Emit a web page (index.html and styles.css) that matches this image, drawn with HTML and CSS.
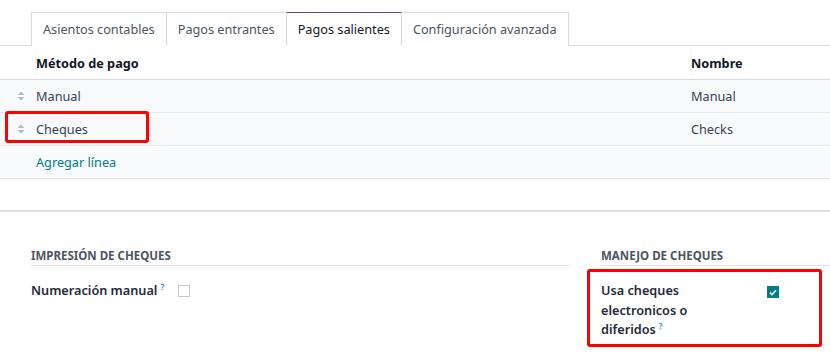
FILE: index.html
```html
<!DOCTYPE html>
<html lang="es">
<head>
    <meta charset="UTF-8">
    <title>Diario - Pagos salientes</title>
    <link rel="stylesheet" href="styles.css">
</head>
<body>
    <div class="sheet">
        <ul class="tabs">
            <li class="tab">Asientos contables</li>
            <li class="tab">Pagos entrantes</li>
            <li class="tab active">Pagos salientes</li>
            <li class="tab">Configuración avanzada</li>
        </ul>

        <table class="lines">
            <thead>
                <tr>
                    <th class="handle-col"></th>
                    <th>Método de pago</th>
                    <th class="name-col">Nombre</th>
                </tr>
            </thead>
            <tbody>
                <tr>
                    <td class="handle-col">
                        <svg class="handle" width="8" height="10" viewBox="0 0 8 10"><path d="M0.5 4 L4 0.5 L7.5 4 Z M0.5 6 L4 9.5 L7.5 6 Z" fill="#b7bcc3"/></svg>
                    </td>
                    <td>Manual</td>
                    <td class="name-col">Manual</td>
                </tr>
                <tr>
                    <td class="handle-col">
                        <svg class="handle" width="8" height="10" viewBox="0 0 8 10"><path d="M0.5 4 L4 0.5 L7.5 4 Z M0.5 6 L4 9.5 L7.5 6 Z" fill="#b7bcc3"/></svg>
                    </td>
                    <td><span class="marked marked-row">Cheques</span></td>
                    <td class="name-col">Checks</td>
                </tr>
                <tr>
                    <td class="handle-col"></td>
                    <td><a href="#" class="add-line">Agregar línea</a></td>
                    <td class="name-col"></td>
                </tr>
            </tbody>
        </table>
        <div class="spacer"></div>

        <div class="settings">
            <div class="group left">
                <h3>Impresión de cheques</h3>
                <div class="field">
                    <label>Numeración manual<sup>?</sup></label>
                    <span class="checkbox"></span>
                </div>
            </div>
            <div class="group right">
                <h3>Manejo de cheques</h3>
                <div class="field marked-box">
                    <label>Usa cheques electronicos o diferidos<sup>?</sup></label>
                    <span class="checkbox checked">
                        <svg width="8" height="7" viewBox="0 0 8 7"><path d="M1 3.6 L3 5.5 L7 1.2" fill="none" stroke="#fff" stroke-width="1.6"/></svg>
                    </span>
                </div>
            </div>
        </div>
    </div>
</body>
</html>
```

FILE: styles.css
```css
body {
    margin: 0;
    font-family: "Noto Sans", sans-serif;
    font-size: 12.7px;
    color: #374151;
    background-color: #fff;
}
.sheet {
    width: 830px;
    height: 356px;
    overflow: hidden;
}

/* notebook tabs */
.tabs {
    list-style: none;
    margin: 12px 0 0;
    padding: 0 0 0 31px;
    display: flex;
    border-bottom: 1px solid #d8dadd;
}
.tab {
    padding: 7px 11px 7px;
    line-height: 18px;
    border: 1px solid #d8dadd;
    border-bottom: none;
    margin-bottom: -1px;
    margin-right: -1px;
    background: #fff;
    color: #4b5563;
}
.tab.active {
    color: #111827;
    border-top-color: #714b67;
    padding-bottom: 8px;
    position: relative;
    z-index: 1;
}

/* one2many list */
.lines {
    width: 100%;
    border-collapse: collapse;
}
.lines th {
    text-align: left;
    font-weight: bold;
    color: #111827;
    height: 33px;
    padding: 0;
    border-bottom: 1px solid #d8dadd;
    box-shadow: 0 2px 3px rgba(0, 0, 0, 0.06);
}
.lines td {
    height: 32px;
    padding: 0;
    background: #f9fafb;
    border-bottom: 1px solid #e5e7eb;
}
.handle-col {
    width: 36px;
}
.name-col {
    width: 139px;
}
.handle {
    display: block;
    margin-left: 17px;
}
.marked {
    position: relative;
}
.marked-row::before {
    content: "";
    position: absolute;
    left: -31px;
    right: -61px;
    top: -9px;
    bottom: -5px;
    border: 3px solid #f00;
    border-radius: 3px;
}
.add-line {
    color: #017e84;
    text-decoration: none;
}
.spacer {
    height: 31px;
    border-bottom: 2px solid #dee0e4;
}

/* settings groups */
.settings {
    display: flex;
    padding: 36px 0 0 31px;
}
.group h3 {
    margin: 0;
    font-size: 11.5px;
    font-weight: bold;
    text-transform: uppercase;
    color: #4b5563;
    line-height: 16px;
    padding-bottom: 1px;
    border-bottom: 1px solid #e0e2e6;
}
.group.left {
    width: 539px;
}
.group.right {
    margin-left: 31px;
    flex: 1;
}
.field {
    display: flex;
    align-items: flex-start;
    font-weight: 600;
    color: #1f2937;
    line-height: 19.5px;
}
.left .field {
    margin-top: 15px;
}
.left .field label {
    width: 147px;
}
.field sup {
    color: #0d8bbd;
    font-size: 8px;
    margin-left: 3px;
    line-height: 0;
    vertical-align: 5px;
}
.right .field label {
    width: 120px;
}
.marked-box {
    margin: 3px 8px 0 -14px;
    padding: 9px 11px 4px;
    border: 3px solid #f00;
    border-radius: 3px;
}
.right .checkbox {
    margin-left: 46px;
    margin-top: 5px;
}
.checkbox {
    display: inline-flex;
    align-items: center;
    justify-content: center;
    width: 12px;
    height: 12px;
    margin-top: 4px;
    border: 1px solid #c4c8cd;
    box-sizing: border-box;
    background: #fff;
}
.checkbox.checked {
    background: #017e84;
    border-color: #017e84;
}
```
